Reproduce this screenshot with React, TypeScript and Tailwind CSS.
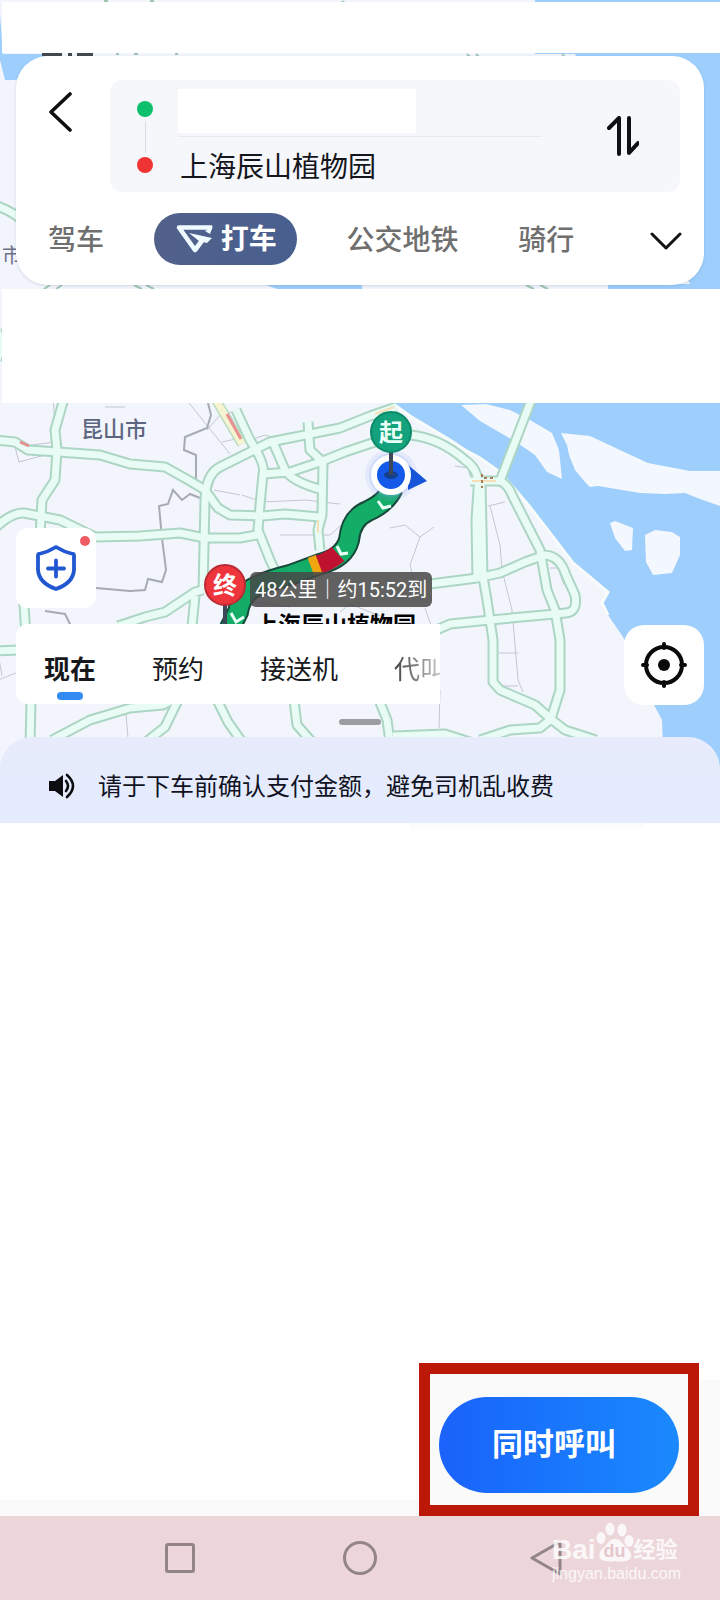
const roads = [
  "M65 395L55 430L57 450L55 480L42 500L40 535L28 600L24 605L27 650L31 700L30 745",
  "M-5 440L15 442L28 450L58 452L100 455L130 464L165 467L190 481L205 490L218 508L230 515L262 516L285 514L320 517",
  "M-5 528Q12 512 24 513L60 520L95 537L140 536L180 533L205 538L240 538L262 534",
  "M203 592L205 500Q206 474 220 467L258 448L270 442L310 434L340 428L370 416L396 407",
  "M236 410L250 440Q266 465 263 474L260 505L258 530L270 560L284 590",
  "M263 474L290 472L320 462L345 452L375 442L410 435Q440 438 465 460Q480 470 478 490L476 520L477 580",
  "M272 440L285 470Q292 482 323 490",
  "M308 422L310 450L323 462L322 515L318 530L320 550",
  "M532 398L500 481L470 481",
  "M500 481Q508 484 513 497L540 550L547 590L555 610L560 640L560 690L551 719L540 728L510 730L480 740",
  "M481 481L483 577L487 600L493 640L493 682L500 690L535 705L551 719L565 730L596 740",
  "M477 578L500 573L525 562L545 555Q560 556 566 575L575 595Q578 612 566 613L490 620L450 624L432 632",
  "M430 584L477 578",
  "M118 626L145 617L165 612L195 592L203 590M195 596L192 626",
  "M52 740L90 720L130 708L163 705L180 696M180 696L165 727L146 742",
  "M217 700L228 722L242 742",
  "M294 700L297 725L312 742",
  "M379 700L387 720L390 742",
  "M393 736L445 734L470 742",
  "M-5 651L20 650",
  "M-5 205Q14 212 24 222",
  "M-3 330L2 345L-3 360",
];

const paths = [
  "M53 395L55 430M60 441L48 443L15 447L19 462L56 452",
  "M189 403L230 454M207 430L220 415L232 412M222 442L240 438M105 407H125",
  "M210 492L215 478M214 490L240 495M250 440L265 435L272 437L300 432",
  "M242 495L262 502L305 500L340 504M280 535L330 535L370 500",
  "M390 528L405 525L420 537L434 527M420 537L410 565L414 580",
  "M455 466L468 468L470 476M488 506L505 502M490 506L500 545L502 570L512 610L518 680L523 692",
  "M497 653L518 653M498 686L518 686M550 568L558 568L564 585",
  "M425 608L432 628M440 690L439 728M125 703L128 738",
  "M-2 680L16 673M-2 652L2 676M240 600L290 607M340 612L350 604L380 616",
];

function MapDrawing() {
  return (
    <svg
      aria-hidden="true"
      className="absolute inset-0 h-full w-full"
      viewBox="0 0 720 823"
      preserveAspectRatio="xMidYMin slice"
      fill="none"
    >
      <rect width="720" height="823" fill="#f3f5fd" />
      <g fill="#9dcefc">
        <path d="M535 0H720V290H608V284H690L575 54H535Z" />
        <path d="M0 14L3 54H48L16 80H5L0 60Z" />
        <path d="M263 284H362V290H280Z" />
        <path d="M392 403L410 416L430 428L450 440L465 450L480 458L500 472L513 487L530 507L550 533L573 563L608 592L602 603L608 615L623 637L640 670L653 703L662 720L663 745V823H720V395H392Z" />
      </g>
      <path d="M392 403L410 416L430 428L450 440L465 450L480 458L500 472L513 487L530 507L550 533L573 563L608 592L602 603L608 615" stroke="#f7fbfa" strokeWidth="3" />
      <g fill="#f3f7fe">
        <path d="M461 405L486 404L510 410L530 420L552 433L559 450L562 479L547 472L535 455L516 442L480 421Z" />
        <path d="M561 433L590 436L620 450L648 463L690 471H720V506L700 499L685 493L665 494L640 493L610 488L598 486L590 487L585 482L575 470L569 455L567 445Z" />
        <path d="M610 523L615 521L633 528L632 550L625 551L615 538Z" />
        <path d="M645 535L655 530L672 532L680 537V555L672 573L653 575L646 562Z" />
      </g>
      <g stroke="#c3c7d2" strokeWidth="1">
        {paths.map((d) => (
          <path key={d} d={d} />
        ))}
      </g>
      <path
        d="M208 403L211 415L207 428L185 437L184 450L196 455V480L210 492M200 498L190 494L182 500L173 490L168 504L159 506L162 538L166 570L162 582L148 579L145 590L130 591L96 588M45 611L65 614L71 626"
        stroke="#a6aab2"
        strokeWidth="2"
      />
      <g stroke="#acd6c3" strokeWidth="11" strokeLinejoin="round">
        {roads.map((d) => (
          <path key={d} d={d} />
        ))}
      </g>
      <g stroke="#e8fbf4" strokeWidth="7" strokeLinejoin="round">
        {roads.map((d) => (
          <path key={d} d={d} />
        ))}
      </g>
      <path d="M216 400L242 444" stroke="#b8dcc4" strokeWidth="10" />
      <path d="M216 400L242 444" stroke="#f6f4d0" strokeWidth="7" />
      <path d="M227 414L241 439M20 442L29 446" stroke="#e88f8f" strokeWidth="3" />
      <path d="M318 520V533M375 414L394 407M472 481H496" stroke="#f4dfb8" strokeWidth="2" />
      <path d="M482 474V488M484 478H494" stroke="#a97d52" strokeWidth="2" strokeDasharray="3 3" />
      <path d="M42 54.5H62M68 54.5H72M77 54.5H93" stroke="#43474d" strokeWidth="3" />
      <path d="M116 54H119M134 54H138M175 54H178M467 54L470 57M476 54L479 57M562 54L565 57M104 1H108M150 1H154M342 1L345 3" stroke="#9fc5b2" strokeWidth="2" />
      <path d="M44 289L50 285M56 289L62 285M134 285L142 289M146 285L154 289M526 285L534 289M540 285L548 289" stroke="#9fc5b2" strokeWidth="2" />

      <path d="M393 488Q386 503 368 511Q351 518 349 540Q344 558 320 564L290 575Q262 582 250 590Q240 598 238 612L228 632" stroke="#17483a" strokeWidth="22" />
      <path d="M393 488Q386 503 368 511Q351 518 349 540Q344 558 320 564L290 575Q262 582 250 590Q240 598 238 612L228 632" stroke="#13ad68" strokeWidth="18" />
      <path d="M338 554Q329 562 317 565" stroke="#bf1230" strokeWidth="19" />
      <path d="M319 564L311 567" stroke="#efa610" strokeWidth="19" />
      <path d="M378 501L383 508L391 506M337 546L341 554L348 553M231 613L236 622L244 617" stroke="#e9fff6" strokeWidth="3" />

      <circle cx="391" cy="475" r="26" fill="#8da9fb" opacity=".14" />
      <circle cx="391" cy="475" r="22" fill="#8da9fb" opacity=".25" />
      <path d="M408 465Q419 474 427 481L408 490Z" fill="#1756d8" />
      <circle cx="391" cy="475" r="17" fill="#1559e8" stroke="#fff" strokeWidth="6" />
      <ellipse cx="391" cy="475" rx="7" ry="4" fill="#13408f" />
      <path d="M391 448V475M225 600V630" stroke="#3c4858" strokeWidth="4" />
      <circle cx="391" cy="432" r="20" fill="#13a27c" stroke="#0b8a6a" strokeWidth="2" />
      <circle cx="225" cy="585" r="20" fill="#ee353c" stroke="#b92a33" strokeWidth="2" />
    </svg>
  );
}

function PlaceField() {
  return (
    <div className="flex h-28 min-w-0 flex-1 items-start rounded-xl bg-[#f5f7fb] pr-[41px]">
      <div className="ml-[27px] flex flex-col items-center pt-[21px]">
        <span className="h-4 w-4 rounded-full bg-[#0ebf6c]" />
        <span className="my-1 h-8 w-px bg-[#d9dce2]" />
        <span className="h-4 w-4 rounded-full bg-[#f03333]" />
      </div>
      <div className="ml-[25px] w-[364px] pt-[9px]">
        <input aria-label="起点" className="block h-11 w-[238px] bg-white px-2 text-[28px]" />
        <div className="mt-[3px] h-px bg-[#e6eaef]" />
        <input
          aria-label="终点"
          defaultValue="上海辰山植物园"
          className="mt-[11px] block h-10 w-full bg-transparent pl-[2px] text-[28px] leading-10 text-[#14161c]"
        />
      </div>
      <button aria-label="交换起点和终点" className="ml-auto mt-9">
        <svg className="h-10 w-8" viewBox="0 0 32 40" fill="none" stroke="#0d1016" strokeWidth="4" strokeLinecap="round" strokeLinejoin="round">
          <path d="M2 12L12 2V38M22 2V37L31 27" />
        </svg>
      </button>
    </div>
  );
}

function SearchCard() {
  return (
    <header className="mx-4 mt-[3px] rounded-[32px] bg-white pt-6 shadow-[0_1px_3px_rgba(80,100,130,0.2)]">
      <div className="flex items-start pr-6">
        <button aria-label="返回" className="ml-8 mr-[34px] mt-3">
          <svg className="h-10 w-7" viewBox="0 0 28 40" fill="none" stroke="#0e0f12" strokeWidth="3.6" strokeLinecap="round" strokeLinejoin="round">
            <path d="M22 2L3 20L22 38" />
          </svg>
        </button>
        <PlaceField />
      </div>
      <nav className="flex h-[93px] items-center justify-between pl-8 pr-[22px] text-[28px] font-medium leading-10 text-[#6f6f6f]">
        <button className="pt-1">驾车</button>
        <button className="flex h-[52px] items-center gap-2 rounded-full bg-linear-to-r from-[#52618a] to-[#485f8f] pl-[22px] pr-5 font-bold text-white">
          <svg className="h-8 w-[37px]" viewBox="0 0 37 32" fill="none" stroke="#effbff" strokeWidth="4.6" strokeLinejoin="round">
            <path d="M36 4.500H3L19 27L28 15" />
            <path d="M13 10L36 15L31 20L23 18Z" fill="#effbff" stroke="none" />
            <path d="M37 3L34 11L29 8Z" fill="#effbff" stroke="none" />
          </svg>
          <span className="pt-[3px]">打车</span>
        </button>
        <button className="pt-1">公交地铁</button>
        <button className="ml-[10px] pt-1">骑行</button>
        <button aria-label="更多出行方式" className="ml-[26px] pt-1">
          <svg className="h-5 w-8" viewBox="0 0 32 20" fill="none" stroke="#141414" strokeWidth="3" strokeLinecap="round" strokeLinejoin="round">
            <path d="M2 3L16 17L30 3" />
          </svg>
        </button>
      </nav>
    </header>
  );
}

function MapLabels() {
  return (
    <div className="absolute inset-x-0 top-0 h-[221px] overflow-hidden whitespace-nowrap">
      <span className="absolute left-[81px] top-[10px] text-[22px] leading-[34px] font-medium text-[#5d6680]">昆山市</span>
      <span className="absolute left-[379px] top-[14px] text-[24px] leading-8 font-bold text-[#e9fff8]">起</span>
      <span className="absolute left-[213px] top-[167px] text-[24px] leading-8 font-bold text-white">终</span>
      <span className="absolute left-[250px] top-[169px] h-[35px] rounded-md bg-[#464646]/85 px-[5px] text-[20px] leading-[37px] text-white">
        48公里｜约15:52到
      </span>
      <span className="absolute left-[255px] top-[205px] text-[23px] leading-9 font-bold text-black">上海辰山植物园</span>
    </div>
  );
}

function ServiceTabs() {
  return (
    <nav className="h-20 w-[424px] overflow-hidden rounded-l-xl bg-white pl-7 pt-[26px] text-[26px] leading-10 text-[#17181b]">
      <div className="flex w-max gap-14">
        <button className="flex flex-col items-center font-bold">
          现在
          <span className="mt-[2px] h-2 w-[26px] rounded-full bg-[#348af3]" />
        </button>
        <button className="self-start">预约</button>
        <button className="self-start">接送机</button>
        <button className="self-start bg-linear-to-r from-[#444] to-[#ddd] bg-clip-text text-transparent">代叫</button>
      </div>
    </nav>
  );
}

function MapArea() {
  return (
    <div className="relative pt-[125px]">
      <MapLabels />
      <button aria-label="安全中心" className="relative ml-4 flex h-20 w-20 items-center justify-center rounded-xl bg-white">
        <svg className="h-[46px] w-[42px]" viewBox="0 0 42 46" fill="none" stroke="#2158d2" strokeWidth="3.8" strokeLinecap="round" strokeLinejoin="round">
          <path d="M21 2Q29 7 38 9Q39 9 39 11V25Q38 38 21 44Q4 38 3 25V11Q3 9 4 9Q13 7 21 2Z" />
          <path d="M21 15.500V31.500M13 23.500H29" />
        </svg>
        <span className="absolute right-[6px] top-2 h-[10px] w-[10px] rounded-full bg-[#f05a63]" />
      </button>
      <div className="relative mx-4 mt-4 flex justify-between">
        <ServiceTabs />
        <button aria-label="定位" className="mt-px flex h-20 w-20 items-center justify-center rounded-[20px] bg-white">
          <svg className="h-[46px] w-[46px]" viewBox="0 0 46 46" fill="none" stroke="#0a0a0a" strokeWidth="4" strokeLinecap="round">
            <circle cx="23" cy="23" r="18" />
            <path d="M23 2V6M23 40V44M2 23H6M40 23H44" />
            <circle cx="23" cy="23" r="6" fill="#0a0a0a" stroke="none" />
          </svg>
        </button>
      </div>
      <div className="relative mx-auto mt-[14px] h-[6px] w-[42px] rounded-full bg-[#9c9da2]" />
    </div>
  );
}

function Watermark() {
  return (
    <div className="absolute right-[38px] top-[6px] w-[130px] text-white/80">
      <div className="flex items-end">
        <span className="font-['Liberation_Sans'] text-[28px] leading-6 font-bold">Bai</span>
        <span className="relative flex h-10 w-[38px] items-end justify-center">
          <svg aria-hidden="true" className="absolute inset-0 h-full w-full" viewBox="0 0 38 40" fill="currentColor">
            <ellipse cx="5" cy="16" rx="4.500" ry="6" />
            <ellipse cx="14" cy="7" rx="4.500" ry="6.500" />
            <ellipse cx="26" cy="8" rx="4.500" ry="6.500" />
            <ellipse cx="33" cy="19" rx="4.500" ry="6" />
            <path d="M19 17C26 17 26 23 33 28C39 37 32 41 19 39C6 41 0 37 5 28C12 23 12 17 19 17Z" />
          </svg>
          <span className="relative font-['Liberation_Sans'] text-[18px] leading-[22px] font-bold text-[#e5c6cc]">du</span>
        </span>
        <span className="text-[22px] leading-6 font-bold whitespace-nowrap">经验</span>
      </div>
      <div className="font-['Liberation_Sans'] text-[16px] leading-6">jingyan.baidu.com</div>
    </div>
  );
}

function SystemNav() {
  return (
    <footer className="relative flex h-[84px] items-center justify-between bg-[#ecd6da] pl-[165px] pr-[158px]">
      <button aria-label="最近任务" className="h-[30px] w-[30px] rounded-[3px] border-3 border-[#938587]" />
      <button aria-label="主页" className="h-[34px] w-[34px] rounded-full border-3 border-[#938587]" />
      <button aria-label="系统返回" className="pl-[5px]">
        <svg className="h-9 w-8" viewBox="0 0 32 36" fill="none" stroke="#938587" strokeWidth="3" strokeLinejoin="round">
          <path d="M30 2V34L2 18Z" />
        </svg>
      </button>
      <Watermark />
    </footer>
  );
}

export default function App() {
  return (
    <div className="flex min-h-screen flex-col bg-white font-['Roboto','Noto_Sans_CJK_SC',sans-serif]">
      <section className="relative overflow-hidden">
        <MapDrawing />
        <span className="absolute left-[2px] top-[241px] text-[20px] leading-[30px] text-[#6a7187]">市</span>
        <div className="relative">
          <div className="ml-[2px] mt-[2px] h-[51px] bg-white" />
          <SearchCard />
          <div className="ml-[2px] mt-1 h-[114px] bg-white" />
          <MapArea />
          <div className="mt-3 flex h-[86px] items-center rounded-t-[32px] bg-linear-to-b from-[#e7ebfb] to-[#e4ecfe] pl-12 pt-3">
            <svg aria-hidden="true" className="h-7 w-7" viewBox="0 0 28 28" fill="#0c0d10">
              <path d="M1 9H7L15 3V25L7 19H1Z" />
              <path d="M18 9Q22 14 18 19M19 3Q31 14 19 25" fill="none" stroke="#0c0d10" strokeWidth="2.600" strokeLinecap="round" />
            </svg>
            <p className="ml-[22px] pt-[2px] text-[24px] leading-9 text-[#10131f]">请于下车前确认支付金额，避免司机乱收费</p>
          </div>
        </div>
      </section>
      <main className="flex flex-1 flex-col justify-between">
        <div className="ml-[57%] h-[6px] w-[234px] bg-[#fbfcfd]" />
        <div className="flex items-end">
          <div className="h-4 flex-1 bg-[#fafafa]" />
          <div className="border-11 border-[#bb1808] bg-[#fafafa] px-[9px] pb-3 pt-[23px]">
            <button className="h-24 w-60 rounded-full bg-linear-to-r from-[#1b62fb] to-[#1b89fd] pr-[10px] text-[31px] font-bold text-white">
              同时呼叫
            </button>
          </div>
          <div className="h-[136px] w-[21px] bg-[#fafafa]" />
        </div>
      </main>
      <SystemNav />
    </div>
  );
}
